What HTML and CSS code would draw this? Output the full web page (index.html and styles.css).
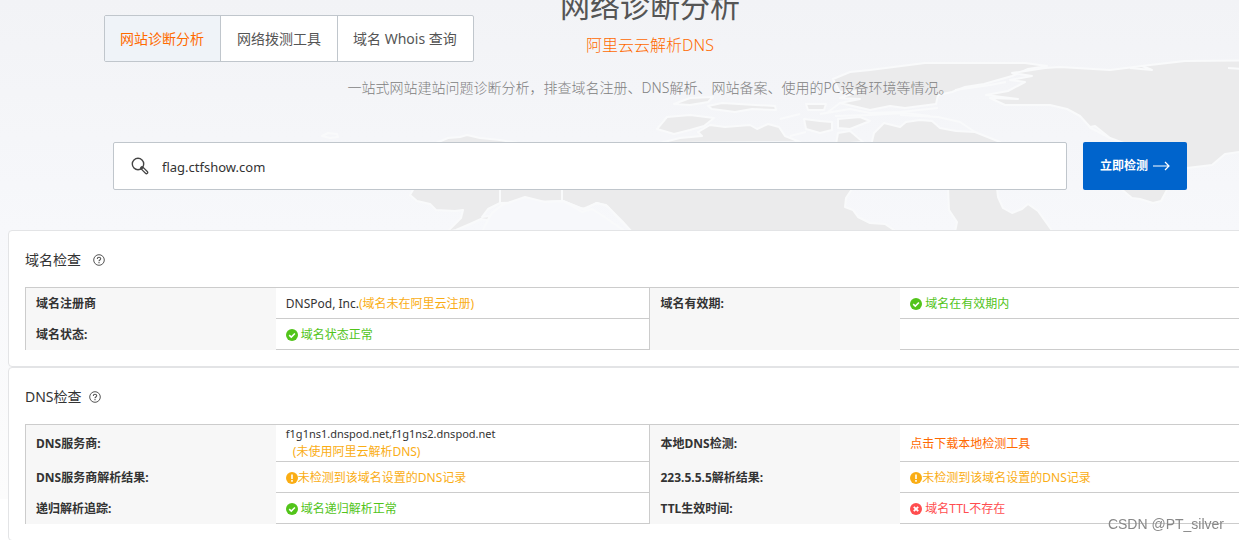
FILE: index.html
```html
<!DOCTYPE html>
<html lang="zh-CN">
<head>
<meta charset="utf-8">
<meta name="viewport" content="width=device-width, initial-scale=1">
<title>网络诊断分析</title>
<link rel="stylesheet" href="styles.css">
</head>
<body>
<svg class="symbols" aria-hidden="true">
  <symbol id="ok" viewBox="0 0 12 12"><circle cx="6" cy="6" r="6" fill="#52c41a"/><path d="M3.2 6.1 5.3 8.1 8.9 4.4" fill="none" stroke="#fff" stroke-width="1.5"/></symbol>
  <symbol id="warn" viewBox="0 0 12 12"><circle cx="6" cy="6" r="6" fill="#faad14"/><path d="M6 2.4V7M6 8.1V9.7" stroke="#fff" stroke-width="1.6"/></symbol>
  <symbol id="err" viewBox="0 0 12 12"><circle cx="6" cy="6" r="6" fill="#ff4d4f"/><path d="M3.8 3.8 8.2 8.2M8.2 3.8 3.8 8.2" stroke="#fff" stroke-width="1.8"/></symbol>
  <symbol id="help" viewBox="0 0 12 12"><circle cx="6" cy="6" r="5.3" fill="none" stroke="#555" stroke-width="1"/><path d="M4.3 4.9C4.3 2.7 7.7 2.7 7.7 4.8 7.7 6 6 6 6 7.3M6 8.1V9.2" fill="none" stroke="#555" stroke-width="1.1"/></symbol>
</svg>
<div class="page">
  <header class="hero">
    <svg class="map" viewBox="0 0 1300 230" preserveAspectRatio="xMidYMin slice" aria-hidden="true">
      <g class="land">
        <path d="M322 136 328 133 337 134 338 137 330 138Z" fill="none"/>
        <path d="M436 143 448 138 460 137 467 135 480 138 500 140 530 145 560 150 560 190 520 198 508 196 500 203 488 209 482 217 490 216 488 220 481 219 470 224 456 230 447 232 461 218 463 210 455 211 436 210 430 204 417 201 410 195 414 188 425 165Z"/>
        <path d="M500 189H852L846 198 845 207 853 210 858 217 870 223 885 224 897 232H632L622 221 606 205 596 203 586 209 580 208 563 201 500 203Z"/>
        <path class="sea" d="M482 232 488 220 492 213 502 205 525 197 545 202 563 201 572 206 582 212 592 209 603 216 626 232Z"/>
        <path d="M562 189V202M563 201 583 209 597 203 607 206 622 222 632 232" fill="none"/>
        <path d="M657 129 667 117 690 115 714 118 704 126 690 130 674 134Z"/>
        <path d="M698 132 710 125 725 127 750 125 757 129 768 124 779 127 785 136 800 142 660 143 680 138 702 136Z"/>
        <path d="M674 104 690 98 713 97 708 102 690 105ZM708 106 722 103 775 106 776 110 752 109 735 112 712 109Z"/>
        <path d="M806 104 826 104 824 110 808 110ZM804 119 820 121 832 122 832 130 820 133 806 129ZM838 119 860 117 870 121 850 129 838 128ZM838 133 850 131 863 142 836 144Z"/>
        <path d="M820 114 850 109 870 113 900 112 938 108M835 116 870 115 905 113 930 116M780 119 800 114M790 136 806 132M828 112 840 103 860 105" fill="none"/>
        <path d="M833 79 850 72 870 70 925 63 1025 63 1047 66 1028 69 1012 76 998 80 984 84 965 87 952 92 938 95 936 104 905 108 890 106 870 110 840 103 860 99 840 98 860 91 840 92Z"/>
        <path d="M874 133 884 123 900 127 906 122 920 120 932 121 940 128 956 131 975 132 1000 142 1000 150 870 150Z"/>
        <path d="M900 115 938 117 960 122 975 132M955 90 990 85 1006 82M1089 127 1110 138" fill="none"/>
        <path d="M1018 99 986 95 1008 91 1025 82 1010 80 1032 76 1012 73 1045 68 1060 67 1110 70 1150 65 1185 61 1302 60V154L1239 152 1225 154 1212 165 1187 168 1170 160 1110 138 1095 126 1090 127 1080 116 1067 109 1050 105 1005 105 990 98Z"/>
        <path d="M1130 68 1152 70 1142 66M1228 68 1245 69" fill="none"/>
        <path d="M948 188H997L998 197 1003 208 1012 213 1022 209 1028 204 1038 211 1053 232H955L957 222 949 210Z"/>
        <path d="M1120 188H1168L1161 201 1153 203 1140 199 1132 198Z"/>
      </g>
    </svg>
    <div class="top">
      <nav class="tabs">
        <a class="tab tab-active" href="#site">网站诊断分析</a>
        <a class="tab" href="#probe">网络拨测工具</a>
        <a class="tab" href="#whois">域名 Whois 查询</a>
      </nav>
      <div class="heading">
        <h1>网络诊断分析</h1>
        <a class="product" href="#dns">阿里云云解析DNS</a>
      </div>
    </div>
    <p class="intro">一站式网站建站问题诊断分析，排查域名注册、DNS解析、网站备案、使用的PC设备环境等情况。</p>
    <form class="search">
      <label class="field">
        <svg class="lens" viewBox="0 0 18 18" aria-hidden="true"><circle cx="7" cy="7" r="5.7" fill="none" stroke="#444" stroke-width="1.4"/><path d="M11 11 15.4 15.4" stroke="#444" stroke-width="3.8" stroke-linecap="round"/><path d="M12.2 12.2 15.4 15.4" stroke="#fff" stroke-width="1.3" stroke-linecap="round"/></svg>
        <input type="text" aria-label="域名" value="flag.ctfshow.com">
      </label>
      <button type="button">立即检测<svg class="arrow" viewBox="0 0 17 10" aria-hidden="true"><path d="M0 5H16M12 1 16 5 12 9" fill="none" stroke="#fff" stroke-width="1.2"/></svg></button>
    </form>
  </header>
  <main>
    <section class="card">
      <h2>域名检查<svg class="help help-wide"><use href="#help"/></svg></h2>
      <table>
        <tr><th scope="row">域名注册商</th><td>DNSPod, Inc.<span class="warn">(域名未在阿里云注册)</span></td><th scope="row">域名有效期:</th><td class="ok"><svg class="state gap"><use href="#ok"/></svg>域名在有效期内</td></tr>
        <tr><th scope="row">域名状态:</th><td class="ok"><svg class="state gap"><use href="#ok"/></svg>域名状态正常</td><th></th><td></td></tr>
      </table>
    </section>
    <section class="card">
      <h2>DNS检查<svg class="help"><use href="#help"/></svg></h2>
      <table>
        <tr><th scope="row">DNS服务商:</th><td class="double"><span class="servers">f1g1ns1.dnspod.net,f1g1ns2.dnspod.net</span><span class="note warn">(未使用阿里云解析DNS)</span></td><th scope="row">本地DNS检测:</th><td><a class="download" href="#download">点击下载本地检测工具</a></td></tr>
        <tr><th scope="row">DNS服务商解析结果:</th><td class="warn"><svg class="state"><use href="#warn"/></svg>未检测到该域名设置的DNS记录</td><th scope="row">223.5.5.5解析结果:</th><td class="warn"><svg class="state"><use href="#warn"/></svg>未检测到该域名设置的DNS记录</td></tr>
        <tr><th scope="row">递归解析追踪:</th><td class="ok"><svg class="state gap"><use href="#ok"/></svg>域名递归解析正常</td><th scope="row">TTL生效时间:</th><td class="err"><svg class="state gap"><use href="#err"/></svg>域名TTL不存在</td></tr>
      </table>
    </section>
  </main>
</div>
<div class="watermark">CSDN @PT_silver</div>
</body>
</html>
```
FILE: styles.css
```css
* { box-sizing: border-box; }
html { background: #fff; }
body {
  margin: 0;
  overflow: hidden;
  font: 12px/18px "Noto Sans", "Noto Sans CJK SC", sans-serif;
  color: #333;
}
a { text-decoration: none; color: inherit; }
.symbols { display: none; }
.page {
  width: calc(100% + 61px);
  background: linear-gradient(#f2f3f6, #f7f8fb 230px, #fcfcfc 499px, #fff 499px);
}
.hero { position: relative; padding: 0 8px 40px; }
.map { position: absolute; inset: 0; width: 100%; height: 100%; }
.land { fill: #ebebec; stroke: #f9fafb; stroke-width: 2; stroke-linejoin: round; }
.sea { fill: #f7f8fb; }
.top, .intro, .search { position: relative; }
.top {
  display: grid;
  grid-template-columns: 1fr auto 1fr;
  padding: 0 96px;
}
.tabs {
  display: flex;
  justify-self: start;
  margin-top: 15px;
  height: 47px;
  border: 1px solid #c0c6cc;
  border-radius: 2px;
  background: #fff;
  overflow: hidden;
  font-size: 14px;
  line-height: 46px;
  color: #555;
  white-space: nowrap;
}
.tab { padding: 0 16px; }
.tab + .tab { border-left: 1px solid #c0c6cc; }
.tab:first-child, .tab:last-child { padding: 0 16px 0 15px; }
.tab-active { background: #eff3f8; color: #ff6a00; }
.heading { text-align: center; margin-top: -17px; }
h1 { margin: 0; font-size: 30px; line-height: 46px; font-weight: 400; color: #555; }
.product { display: block; font-size: 16px; line-height: 32px; font-weight: 300; color: #ff6a00; }
.intro { margin: 16px 0 0; text-align: center; font-size: 14px; line-height: 20px; font-weight: 300; color: #808080; }
.search { display: flex; gap: 16px; margin: 44px 105px 0; }
.field {
  flex: 1;
  display: flex;
  align-items: center;
  gap: 13px;
  height: 48px;
  padding: 0 17px;
  border: 1px solid #c0c6cc;
  border-radius: 2px;
  background: #fff;
}
.lens { width: 18px; height: 18px; }
.field input { flex: 1; border: 0; padding: 2px 0 0; outline: 0; background: none; font: inherit; font-size: 13px; line-height: 20px; color: #333; }
.search button {
  display: flex;
  align-items: center;
  justify-content: center;
  gap: 5px;
  width: 104px;
  height: 48px;
  padding: 0;
  border: 0;
  border-radius: 2px;
  background: #0064cc;
  color: #fff;
  font: inherit;
  font-weight: 700;
}
.arrow { width: 17px; height: 10px; }
.card {
  margin: 0 8px;
  padding: 16px;
  border: 1px solid #e3e4e6;
  border-radius: 4px;
  background: #fff;
}
h2 { display: flex; align-items: center; margin: 0 0 14px; font-size: 14px; line-height: 26px; font-weight: 400; }
.help { width: 12px; height: 12px; margin-left: 7px; }
.help-wide { margin-left: 12px; }
table { width: 100%; table-layout: fixed; border-collapse: separate; border-spacing: 0; border-top: 1px solid #ccc; border-left: 1px solid #ccc; }
th, td { height: 31px; padding: 1px 10px 0; text-align: left; vertical-align: middle; }
th { width: 20%; background: #f7f7f7; font-weight: 700; }
td { width: 30%; border-bottom: 1px solid #ccc; border-right: 1px solid #ccc; }
.double { height: 37px; padding-top: 0; }
.servers { display: block; font-size: 11px; }
.note { display: block; padding-left: 7px; }
.state { width: 12px; height: 12px; vertical-align: -2px; }
.gap { margin-right: 3px; }
.ok { color: #52c41a; }
.warn { color: #faad14; }
.err { color: #ff4d4f; }
.download { color: #ff6a00; }
.watermark {
  position: fixed;
  right: 15px;
  bottom: 7px;
  font: 14px/18px "Liberation Sans", sans-serif;
  color: #888;
}
```
